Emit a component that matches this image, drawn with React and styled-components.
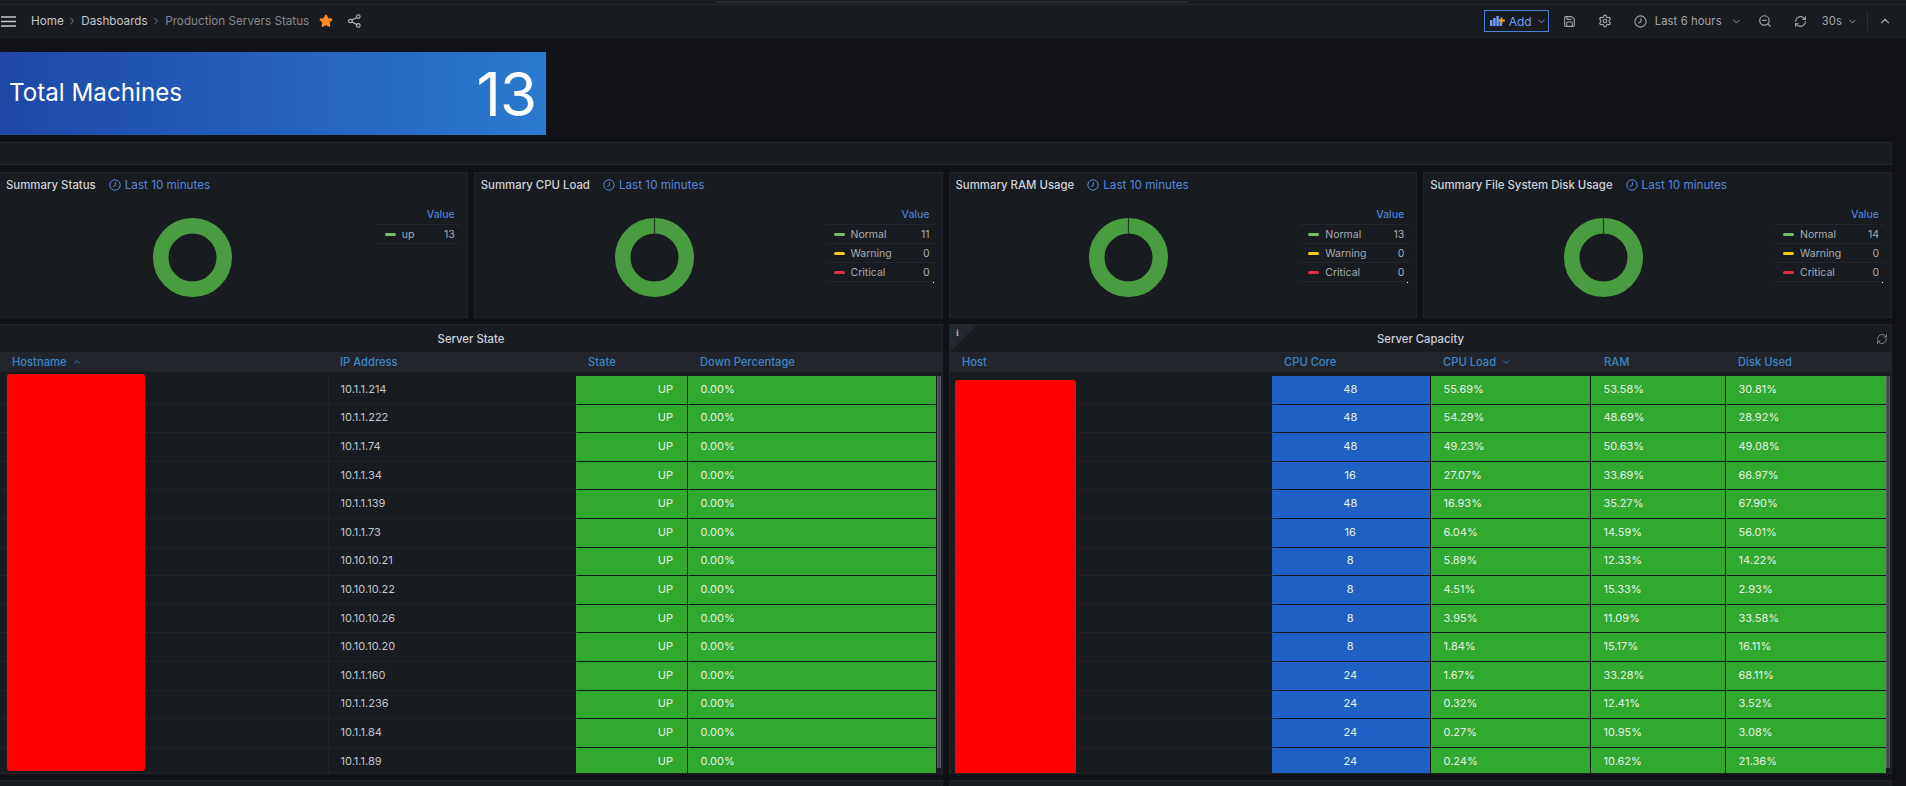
import React from 'react';
import styled, { createGlobalStyle } from 'styled-components';
import { ChevronDown, ChevronRight, ChevronUp, RefreshCw, Save, Settings, Star, ZoomOut } from 'lucide-react';

const GlobalStyle = createGlobalStyle`
  html, body {
    margin: 0;
    padding: 0;
    background: #111217;
    overflow: hidden;
  }
  * { box-sizing: border-box; }
`;

const Page = styled.div`
  width: 1906px;
  height: 786px;
  overflow: hidden;
  background: #111217;
  color: #ccccdc;
  font-family: Inter, "Liberation Sans", sans-serif;
  font-size: 12px;
`;

const TopStrip = styled.div`
  height: 5px;
  background: #181b1f;
  border-bottom: 1px solid #24262b;
  display: flex;
  justify-content: center;
  padding-top: 1px;
`;

const StripLine = styled.div`
  width: 472px;
  height: 2px;
  margin-right: 3px;
  background: #2a2c31;
`;

const TopBar = styled.header`
  height: 33px;
  background: #181b1f;
  border-bottom: 1px solid #222428;
  display: flex;
  align-items: center;
  justify-content: space-between;
  padding: 0 14px 0 1px;
`;

const Crumbs = styled.nav`
  display: flex;
  align-items: center;
`;

const Burger = styled.svg`
  width: 15px;
  height: 11px;
  margin-right: 15px;
  color: #c8c9d0;
`;

const Crumb = styled.span`
  font-size: 11.7px;
  color: ${p => (p.$current ? '#85878e' : '#c4c5cc')};
`;

const CrumbSep = styled(ChevronRight)`
  color: #7e8087;
  margin: 0 3px 0 2.5px;
`;

const FavStar = styled(Star)`
  color: #ff8a25;
  margin: 0 15px 0 10px;
`;

const Tools = styled.div`
  display: flex;
  align-items: center;
  color: #a2a4ab;
`;

const AddButton = styled.div`
  width: 65px;
  height: 22px;
  border: 1px solid #4d7ed6;
  display: flex;
  align-items: center;
  padding-left: 5px;
  margin-right: 14px;
  color: #6e9fff;
  font-size: 12px;
  gap: 4px;
`;

const ToolText = styled.span`
  font-size: 11.25px;
  color: #a2a4ab;
  letter-spacing: 0.1px;
`;

const ToolSlot = styled.span`
  display: flex;
  align-items: center;
  margin-left: ${p => p.$left || 0}px;
`;

const ToolDivider = styled.div`
  width: 1px;
  height: 20px;
  background: #2c2e33;
  margin-left: 9px;
`;

const Dashboard = styled.main`
  margin-left: -1px;
  padding: 14px 14px 0 0;
  display: flex;
  flex-direction: column;
`;

const StatPanel = styled.section`
  width: 547px;
  height: 83px;
  margin-bottom: 7px;
  padding: 0 10px 0 10px;
  display: flex;
  align-items: center;
  justify-content: space-between;
  background: linear-gradient(90deg, #1f47a6 0%, #2a7ad0 100%);
  color: #fff;
`;

const StatLabel = styled.span`
  font-size: 24.2px;
  margin-top: -2px;
`;

const StatValue = styled.span`
  font-size: 60px;
  font-weight: 400;
  letter-spacing: -1px;
`;

const CollapsedRow = styled.div`
  height: 23px;
  margin-bottom: 7px;
  background: #181b1f;
  border: 1px solid #24262b;
`;

const SummaryGrid = styled.div`
  display: grid;
  grid-template-columns: repeat(4, 1fr);
  gap: 6px;
  margin-bottom: 6px;
`;

const Panel = styled.section`
  position: relative;
  background: #181b1f;
  border: 1px solid #22242a;
  display: flex;
  flex-direction: column;
  height: ${p => p.$height}px;
`;

const SummaryHead = styled.div`
  height: 24px;
  display: flex;
  align-items: center;
  padding-left: 6px;
`;

const SummaryTitle = styled.span`
  color: #d0d1d8;
  font-size: 11.4px;
  font-weight: 500;
  margin-right: 13px;
`;

const TimeShift = styled.span`
  display: flex;
  align-items: center;
  gap: 4px;
  font-size: 11.7px;
  color: #5a86d8;
`;

const SummaryBody = styled.div`
  flex: 1;
  display: flex;
  align-items: flex-start;
  padding: 9px 7px 0 8px;
`;

const ChartArea = styled.div`
  flex: 1;
  display: flex;
  justify-content: center;
  padding-top: 12px;
`;

const Legend = styled.div`
  position: relative;
  width: ${p => p.$width}px;
  font-size: 10.5px;
`;

const LegendHead = styled.div`
  height: 19px;
  padding-right: 5px;
  text-align: right;
  line-height: 18px;
  color: #4f7ed4;
  font-weight: 500;
  border-bottom: 1px solid #24262b;
`;

const LegendRow = styled.div`
  height: 19px;
  display: flex;
  align-items: center;
  padding: 0 5px 0 8px;
  border-bottom: 1px solid #24262b;
  color: #a9abb3;
`;

const Swatch = styled.i`
  width: 11px;
  height: 3px;
  border-radius: 2px;
  margin-right: 6px;
  background: ${p => p.$color};
`;

const LegendValue = styled.span`
  margin-left: auto;
`;

const LegendDot = styled.i`
  position: absolute;
  right: 1px;
  bottom: -1px;
  width: 1px;
  height: 1px;
  background: #fff;
`;

const TableGrid = styled.div`
  display: grid;
  grid-template-columns: 944px 943px;
  gap: 6px;
  margin-bottom: 6px;
`;

const TableTitle = styled.div`
  height: 27px;
  flex: none;
  display: flex;
  align-items: center;
  justify-content: center;
  color: #d0d1d8;
  font-size: 11.3px;
  font-weight: 500;
`;

const InfoCorner = styled.div`
  position: absolute;
  left: 0;
  top: 0;
  width: 26px;
  height: 26px;
  background: linear-gradient(135deg, #24272d 50%, transparent 50%);
  color: #a9abb3;
  font-family: "Liberation Serif", serif;
  font-weight: 700;
  font-size: 10px;
  padding: 2px 0 0 6px;
`;

const CornerRefresh = styled(RefreshCw)`
  position: absolute;
  right: 3px;
  top: 8px;
  color: #7f8187;
`;

const HeadRow = styled.div`
  height: 20px;
  flex: none;
  display: grid;
  grid-template-columns: ${p => p.$cols};
  background: #22252b;
  border-top: 1px solid #24262c;
  border-bottom: 1px solid #202226;
`;

const HeadCell = styled.div`
  display: flex;
  align-items: center;
  gap: 5px;
  padding-left: ${p => p.$pad}px;
  color: #3d86c6;
  font-size: 11.2px;
  font-weight: 500;
`;

const TableBody = styled.div`
  position: relative;
  flex: 1;
  overflow: hidden;
  padding-top: 4px;
`;

const Row = styled.div`
  height: 28.6px;
  display: grid;
  grid-template-columns: ${p => p.$cols};
`;

const toneColor = { plain: 'transparent', green: '#31a82e', blue: '#1f60c4' };

const Cell = styled.div`
  display: flex;
  align-items: center;
  justify-content: ${p => p.$justify || 'flex-start'};
  padding: 0 14px 2px 11.5px;
  font-size: 11px;
  background: ${p => toneColor[p.$tone || 'plain']};
  color: ${p => (p.$tone && p.$tone !== 'plain' ? '#e6f4e4' : '#c4c5cc')};
  border-bottom: 1px solid ${p => (p.$tone && p.$tone !== 'plain' ? '#14161a' : '#212327')};
  border-right: 1px solid ${p => (p.$tone && p.$tone !== 'plain' ? '#14161a' : 'transparent')};
  border-left: 1px solid ${p => (p.$ruled ? '#212327' : 'transparent')};
  &:last-child { border-right: 0; }
`;

const Redaction = styled.div`
  position: absolute;
  left: ${p => p.$left}px;
  top: ${p => p.$top}px;
  width: ${p => p.$width}px;
  height: ${p => p.$height}px;
  background: #ff0000;
  border-radius: 3px;
`;

const ScrollThumb = styled.div`
  position: absolute;
  right: 1px;
  top: 4px;
  bottom: 5px;
  width: 4px;
  background: #45464e;
  border: 1px solid #55565e;
`;

const BottomPanel = styled.div`
  height: 20px;
  background: #181b1f;
  border: 1px solid #22242a;
`;

const ClockIcon = ({ size = 12, color = 'currentColor' }) => (
  <svg width={size} height={size} viewBox="0 0 12 12" fill="none" stroke={color} strokeWidth="1">
    <circle cx="6" cy="6" r="5.2" />
    <path d="M6.4 3v3.2L4 7.6" />
  </svg>
);

const AddPanelIcon = () => (
  <svg width="15" height="12" viewBox="0 0 15 12">
    <g fill="#6e9fff">
      <rect x="0" y="5" width="2.4" height="6" />
      <rect x="3.2" y="3" width="2.4" height="8" />
      <rect x="6.4" y="1" width="2.4" height="10" />
    </g>
    <path d="M9.6 6V11h2.4V8.5z" fill="#6e9fff" />
    <path d="M11.5 2.5v6M8.8 5.5h6" stroke="#f5a623" strokeWidth="1.8" />
  </svg>
);

const ShareIcon = () => (
  <svg width="13" height="14" viewBox="0 0 13 14" fill="none" stroke="#c4c5cc" strokeWidth="1.1">
    <circle cx="2.4" cy="7" r="1.8" />
    <circle cx="10.3" cy="2.6" r="1.8" />
    <circle cx="10.3" cy="11.4" r="1.8" />
    <path d="M4 6.1l4.7-2.6M4 7.9l4.7 2.6" />
  </svg>
);

const Donut = ({ split }) => (
  <svg width="79" height="79" viewBox="0 0 79 79">
    <circle cx="39.5" cy="39.5" r="31.75" fill="none" stroke="#4a9c40" strokeWidth="15.5" />
    {split && <path d="M39.5 0V15.5" stroke="#1f3a1f" strokeWidth="1.2" />}
  </svg>
);

const levels = [
  { name: 'Normal', color: '#73bf69' },
  { name: 'Warning', color: '#f2cc0c' },
  { name: 'Critical', color: '#e02f44' },
];

const summaries = [
  { title: 'Summary Status', rows: [{ name: 'up', color: '#73bf69', value: 13 }], width: 83 },
  { title: 'Summary CPU Load', rows: levels.map((l, i) => ({ ...l, value: [11, 0, 0][i] })), width: 109, split: true },
  { title: 'Summary RAM Usage', rows: levels.map((l, i) => ({ ...l, value: [13, 0, 0][i] })), width: 109, split: true },
  { title: 'Summary File System Disk Usage', rows: levels.map((l, i) => ({ ...l, value: [14, 0, 0][i] })), width: 109, split: true },
];

const ips = [
  '10.1.1.214', '10.1.1.222', '10.1.1.74', '10.1.1.34', '10.1.1.139', '10.1.1.73', '10.10.10.21',
  '10.10.10.22', '10.10.10.26', '10.10.10.20', '10.1.1.160', '10.1.1.236', '10.1.1.84', '10.1.1.89',
];

const capacity = [
  [48, '55.69%', '53.58%', '30.81%'],
  [48, '54.29%', '48.69%', '28.92%'],
  [48, '49.23%', '50.63%', '49.08%'],
  [16, '27.07%', '33.69%', '66.97%'],
  [48, '16.93%', '35.27%', '67.90%'],
  [16, '6.04%', '14.59%', '56.01%'],
  [8, '5.89%', '12.33%', '14.22%'],
  [8, '4.51%', '15.33%', '2.93%'],
  [8, '3.95%', '11.09%', '33.58%'],
  [8, '1.84%', '15.17%', '16.11%'],
  [24, '1.67%', '33.28%', '68.11%'],
  [24, '0.32%', '12.41%', '3.52%'],
  [24, '0.27%', '10.95%', '3.08%'],
  [24, '0.24%', '10.62%', '21.36%'],
];

const stateCols = '328px 248px 112px 248px';
const capacityCols = '322px 159px 160px 135px 160px';

export default function App() {
  return (
    <Page>
      <GlobalStyle />
      <TopStrip><StripLine /></TopStrip>
      <TopBar>
        <Crumbs>
          <Burger viewBox="0 0 15 11" fill="none" stroke="currentColor" strokeWidth="1.6">
            <path d="M0 1h15M0 5.5h15M0 10h15" />
          </Burger>
          <Crumb>Home</Crumb>
          <CrumbSep size={12} />
          <Crumb>Dashboards</Crumb>
          <CrumbSep size={12} />
          <Crumb $current>Production Servers Status</Crumb>
          <FavStar size={14} fill="#ff8a25" />
          <ShareIcon />
        </Crumbs>
        <Tools>
          <AddButton>
            <AddPanelIcon />
            Add
            <ChevronDown size={11} />
          </AddButton>
          <Save size={13} />
          <ToolSlot $left={22}><Settings size={14} /></ToolSlot>
          <ToolSlot $left={22}><ClockIcon size={13} /></ToolSlot>
          <ToolSlot $left={8}><ToolText>Last 6 hours</ToolText></ToolSlot>
          <ToolSlot $left={9}><ChevronDown size={11} /></ToolSlot>
          <ToolSlot $left={16}><ZoomOut size={14} /></ToolSlot>
          <ToolSlot $left={22}><RefreshCw size={13} /></ToolSlot>
          <ToolSlot $left={15}><ToolText>30s</ToolText></ToolSlot>
          <ToolSlot $left={5}><ChevronDown size={11} /></ToolSlot>
          <ToolDivider />
          <ToolSlot $left={10}><ChevronUp size={14} /></ToolSlot>
        </Tools>
      </TopBar>
      <Dashboard>
        <StatPanel>
          <StatLabel>Total Machines</StatLabel>
          <StatValue>13</StatValue>
        </StatPanel>
        <CollapsedRow />
        <SummaryGrid>
          {summaries.map(s => (
            <Panel key={s.title} $height={146}>
              <SummaryHead>
                <SummaryTitle>{s.title}</SummaryTitle>
                <TimeShift><ClockIcon size={12} />Last 10 minutes</TimeShift>
              </SummaryHead>
              <SummaryBody>
                <ChartArea><Donut split={s.split} /></ChartArea>
                <Legend $width={s.width}>
                  <LegendHead>Value</LegendHead>
                  {s.rows.map(r => (
                    <LegendRow key={r.name}>
                      <Swatch $color={r.color} />
                      {r.name}
                      <LegendValue>{r.value}</LegendValue>
                    </LegendRow>
                  ))}
                  {s.split && <LegendDot />}
                </Legend>
              </SummaryBody>
            </Panel>
          ))}
        </SummaryGrid>
        <TableGrid>
          <Panel $height={450}>
            <TableTitle>Server State</TableTitle>
            <HeadRow $cols={stateCols}>
              <HeadCell $pad={12}>Hostname <ChevronUp size={10} /></HeadCell>
              <HeadCell $pad={12}>IP Address</HeadCell>
              <HeadCell $pad={12}>State</HeadCell>
              <HeadCell $pad={12}>Down Percentage</HeadCell>
            </HeadRow>
            <TableBody>
              {ips.map(ip => (
                <Row key={ip} $cols={stateCols}>
                  <Cell />
                  <Cell $ruled>{ip}</Cell>
                  <Cell $tone="green" $justify="flex-end">UP</Cell>
                  <Cell $tone="green">0.00%</Cell>
                </Row>
              ))}
              <Redaction $left={7} $top={2} $width={138} $height={397} />
              <ScrollThumb />
            </TableBody>
          </Panel>
          <Panel $height={450}>
            <InfoCorner>i</InfoCorner>
            <CornerRefresh size={12} />
            <TableTitle>Server Capacity</TableTitle>
            <HeadRow $cols={capacityCols}>
              <HeadCell $pad={12}>Host</HeadCell>
              <HeadCell $pad={12}>CPU Core</HeadCell>
              <HeadCell $pad={12}>CPU Load <ChevronDown size={10} /></HeadCell>
              <HeadCell $pad={13}>RAM</HeadCell>
              <HeadCell $pad={12}>Disk Used</HeadCell>
            </HeadRow>
            <TableBody>
              {capacity.map(([core, cpu, ram, disk]) => (
                <Row key={cpu} $cols={capacityCols}>
                  <Cell />
                  <Cell $tone="blue" $justify="center">{core}</Cell>
                  <Cell $tone="green">{cpu}</Cell>
                  <Cell $tone="green">{ram}</Cell>
                  <Cell $tone="green">{disk}</Cell>
                </Row>
              ))}
              <Redaction $left={5} $top={8} $width={121} $height={400} />
              <ScrollThumb />
            </TableBody>
          </Panel>
          <BottomPanel />
          <BottomPanel />
        </TableGrid>
      </Dashboard>
    </Page>
  );
}
